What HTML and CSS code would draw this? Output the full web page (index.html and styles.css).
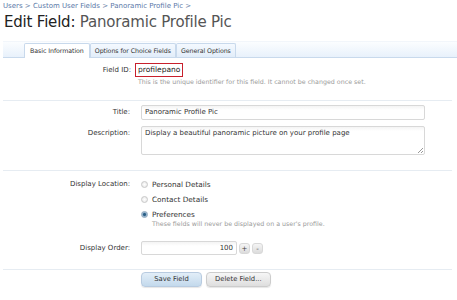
FILE: index.html
```html
<!DOCTYPE html>
<html>
<head>
<meta charset="utf-8">
<link rel="stylesheet" href="styles.css">
</head>
<body>
<div class="page">
  <nav class="crumbs"><a>Users</a> &gt; <a>Custom User Fields</a> &gt; <a>Panoramic Profile Pic</a> &gt;</nav>
  <h1 class="title">Edit Field: <span class="sub">Panoramic Profile Pic</span></h1>
  <div class="tabbar">
    <span class="tab active">Basic Information</span><span class="tab">Options for Choice Fields</span><span class="tab">General Options</span>
  </div>
  <div class="form">
    <div class="row first">
      <label class="lbl">Field ID:</label>
      <div class="ctrl">
        <span class="fieldid">profilepano</span>
        <p class="hint">This is the unique identifier for this field. It cannot be changed once set.</p>
      </div>
    </div>
    <hr class="sep">
    <div class="row r-title">
      <label class="lbl">Title:</label>
      <div class="ctrl"><div class="input">Panoramic Profile Pic</div></div>
    </div>
    <div class="row r-desc">
      <label class="lbl">Description:</label>
      <div class="ctrl"><div class="input textarea">Display a beautiful panoramic picture on your profile page<span class="grip"></span></div></div>
    </div>
    <hr class="sep sep2">
    <div class="row r-loc">
      <label class="lbl">Display Location:</label>
      <div class="ctrl radios">
        <div class="radio"><span class="dot"></span>Personal Details</div>
        <div class="radio"><span class="dot"></span>Contact Details</div>
        <div class="radio"><span class="dot on"></span>Preferences</div>
        <p class="hint rhint">These fields will never be displayed on a user's profile.</p>
      </div>
    </div>
    <div class="row r-order">
      <label class="lbl">Display Order:</label>
      <div class="ctrl spin">
        <div class="input num">100</div>
        <span class="sbtn">+</span><span class="sbtn">-</span>
      </div>
    </div>
    <hr class="sep sep3">
    <div class="row r-buttons">
      <div class="lbl"></div>
      <div class="ctrl btns">
        <span class="btn primary">Save Field</span>
        <span class="btn">Delete Field...</span>
      </div>
    </div>
  </div>
</div>
</body>
</html>
```
FILE: styles.css
```css
html, body { margin: 0; padding: 0; background: #fff; }
body { font-family: "DejaVu Sans", Verdana, sans-serif; color: #222; }
.page { width: 457px; height: 300px; overflow: hidden; }
.crumbs { font-size: 7px; color: #6b84a8; padding: 2px 0 0 3px; height: 9px; line-height: 9px; }
.crumbs a { color: #5a78a8; }
.title { margin: 2px 0 0 4px; font-weight: normal; font-size: 15px; line-height: 18px; color: #222; letter-spacing: -0.2px; }
.title .sub { color: #555; }
.tabbar { margin: 10px 0 0 3px; height: 15px; border-bottom: 1px solid #c8d9ec; background: linear-gradient(#fbfdff, #e8f1fb); padding-left: 21px; display: flex; align-items: flex-end; border-top: 1px solid #f2f6fb; }
.tab { font-size: 6.3px; line-height: 13px; height: 13px; padding: 0 4px; border: 1px solid #c8d9ec; border-bottom: none; background: linear-gradient(#f4f9ff, #e2edf9); color: #333; margin-right: 0; border-radius: 2px 2px 0 0; letter-spacing: -0.08px; }
.tab.active { background: #fff; height: 14px; margin-bottom: -1px; padding: 0 5px; }
.form { font-size: 7px; line-height: 14px; }
.row { display: flex; align-items: flex-start; }
.lbl { width: 134px; text-align: right; padding-right: 4px; box-sizing: border-box; font-size: 7px; color: #333; line-height: 14px; flex: none; }
.ctrl { flex: none; width: 291px; }
.row .ctrl > .input { margin-left: 7px; }
.first { margin-top: 5px; }
.first .lbl { width: 135px; padding-right: 4px; }
.fieldid { display: inline-block; border: 1px solid #c8202d; padding: 0 2px; font-size: 7.5px; line-height: 12px; color: #222; vertical-align: top; }
.hint { margin: 0; font-size: 6.3px; color: #9a9a9a; line-height: 9px; padding-left: 3px; }
.sep { border: 0; border-top: 1px solid #e6ecf2; margin: 14px 5px 0 3px; }
.input { border: 1px solid #d8d8d8; border-radius: 2px; height: 13px; line-height: 13px; font-size: 7px; padding: 0 3px; color: #333; background: linear-gradient(#f4f4f4, #fff 4px); position: relative; }
.r-title { margin-top: 4px; }
.r-desc { margin-top: 6px; }
.textarea { height: 27px; line-height: 12px; }
.grip { position: absolute; right: 1px; bottom: 1px; width: 5px; height: 5px; background: linear-gradient(135deg, transparent 45%, #999 45%, #999 55%, transparent 55%, transparent 75%, #999 75%, #999 85%, transparent 85%); }
.sep2 { margin-top: 15px; }
.r-loc { margin-top: 6px; }
.radios { padding-left: 7px; }
.radio { display: flex; align-items: center; font-size: 7.3px; height: 15px; color: #333; }
.dot { width: 7px; height: 7px; border-radius: 50%; border: 1px solid #c8c8c8; background: radial-gradient(#fff, #e4e4e4); margin-right: 4px; box-sizing: border-box; }
.dot.on { background: radial-gradient(#2a5f86 30%, #9cb8d0 60%, #dde); border-color: #8ea7bd; }
.rhint { padding-left: 11px; margin-top: -3px; }
.r-order { margin-top: 13px; }
.spin { display: flex; align-items: center; }
.input.num { width: 88px; text-align: right; height: 12px; }
.sbtn { display: inline-block; width: 11px; height: 11px; line-height: 11px; text-align: center; font-size: 7px; background: linear-gradient(#f5f5f5, #dcdcdc); border: 1px solid #d8d8d8; border-radius: 3px; margin-left: 2px; color: #444; box-sizing: border-box; }
.sep3 { margin-top: 14px; }
.r-buttons { margin-top: 2px; }
.btns { display: flex; padding-left: 7px; }
.btn { height: 13px; line-height: 13px; font-size: 6.8px; padding: 0 8px; border: 1px solid #ccc; border-radius: 4px; background: linear-gradient(#f6f6f6, #dedede); color: #333; margin-right: 4px; box-shadow: 0 1px 1px rgba(0,0,0,0.1); }
.btn.primary { background: linear-gradient(#e2eef8, #c3d9ec); border-color: #b8cbe0; width: 43px; padding: 0 8px; text-align: center; }
```
